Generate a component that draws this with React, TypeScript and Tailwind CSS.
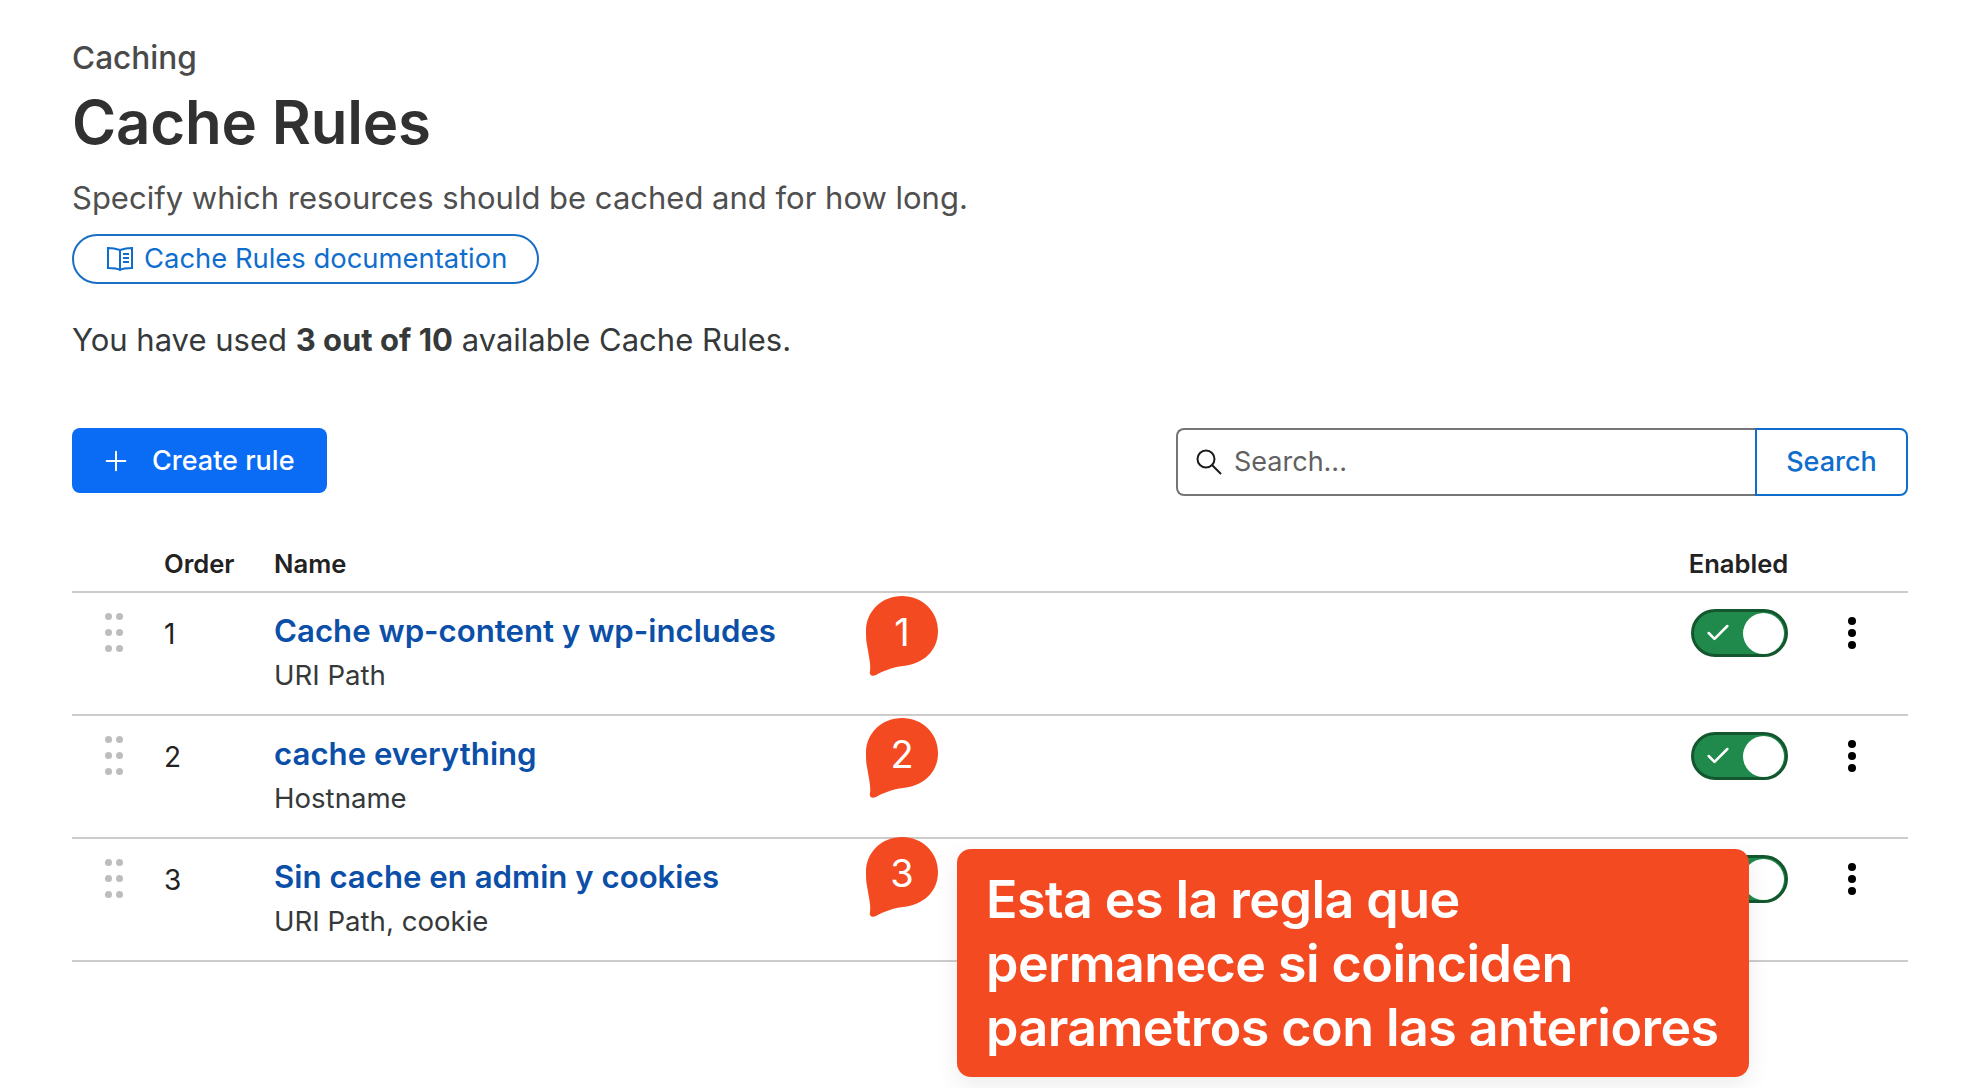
import React from "react";
import { Check, Plus } from "lucide-react";

const font = { fontFamily: "Inter, 'Liberation Sans', sans-serif" };

const rules = [
  { id: 1, name: "Cache wp-content y wp-includes", sub: "URI Path", bubbleTop: "top-[2px]" },
  { id: 2, name: "cache everything", sub: "Hostname", bubbleTop: "top-[1px]" },
  { id: 3, name: "Sin cache en admin y cookies", sub: "URI Path, cookie", bubbleTop: "-top-[3px]" },
];

function DragDots() {
  return (
    <div className="grid grid-cols-2 gap-x-[4px] gap-y-[9px] w-[18px]">
      {[0, 1, 2, 3, 4, 5].map((i) => (
        <div key={i} className="w-[7px] h-[7px] rounded-full bg-[#bdbdbd]" />
      ))}
    </div>
  );
}

function Kebab() {
  return (
    <div className="flex flex-col gap-[4px] items-center">
      <div className="w-2 h-2 rounded-full bg-black" />
      <div className="w-2 h-2 rounded-full bg-black" />
      <div className="w-2 h-2 rounded-full bg-black" />
    </div>
  );
}

function Toggle() {
  return (
    <div className="w-[97px] h-[48px] rounded-full bg-[#1f8a4c] border-[3px] border-[#14572f] flex items-center justify-between pl-[10px] pr-[1px]">
      <Check size={28} strokeWidth={2.2} className="text-white" />
      <div className="w-[41px] h-[41px] rounded-full bg-white" />
    </div>
  );
}

function Bubble({ n }: { n: number }) {
  return (
    <div className="relative w-[74px] h-[82px] text-white">
      <svg viewBox="0 0 74 82" className="absolute inset-0 w-full h-full">
        <path
          d="M37 1C57 1 73 16 73 36C73 56 58 69 38 71C28 72 18 76 11 80C7 82 4 80 5 76C6 70 4 62 2 50C1 46 1 40 1 36C1 16 17 1 37 1Z"
          fill="#f44a22"
        />
      </svg>
      <div className="absolute left-0 top-[9px] w-full text-center text-[38px] leading-[56px]">{n}</div>
    </div>
  );
}

function BookIcon() {
  return (
    <svg width="28" height="26" viewBox="0 0 28 26" fill="none" stroke="#0f6ecd" strokeWidth="2">
      <path d="M14 4C11 3 6 2 2 2V22C6 22 11 22 14 24C17 22 22 22 26 22V2C22 2 17 3 14 4ZM14 4V24" />
      <path d="M17 8H23M17 12H23M17 16H23" />
    </svg>
  );
}

function SearchIcon() {
  return (
    <svg width="28" height="28" viewBox="0 0 28 28" fill="none" stroke="#1a1a1a" strokeWidth="2">
      <circle cx="11" cy="11" r="8.5" />
      <path d="M17 17L26 26" />
    </svg>
  );
}

export default function App() {
  return (
    <div className="relative w-[1974px] h-[1088px] bg-white overflow-hidden" style={font}>
      <div className="pl-[72px] pr-[66px] pt-[37px]">
        <div className="text-[31.6px] leading-[42px] font-medium text-[#4a4a4a]">Caching</div>
        <h1 className="mt-[7px] text-[60px] leading-[72px] font-semibold tracking-[-0.2px] text-[#313131]">Cache Rules</h1>
        <p className="mt-[19px] text-[31px] leading-[42px] text-[#4f4f4f]">Specify which resources should be cached and for how long.</p>
        <a className="mt-[15px] inline-flex items-center gap-[10px] h-[50px] w-[467px] pl-[32px] rounded-full border-2 border-[#1a6fc4] text-[27.4px] text-[#0f6ecd]">
          <BookIcon />
          Cache Rules documentation
        </a>
        <p className="mt-[35px] text-[31px] leading-[42px] text-[#36393a]">
          You have used <b className="font-bold">3 out of 10</b> available Cache Rules.
        </p>

        <div className="mt-[67px] flex items-start justify-between">
          <button className="w-[255px] h-[65px] rounded-[8px] bg-[#0a6cf5] text-white text-[27px] font-medium flex items-center pl-[28px] pt-[1px] gap-[20px]">
            <Plus size={32} strokeWidth={1.5} />
            Create rule
          </button>
          <div className="flex h-[68px] w-[732px]">
            <div className="flex-1 flex items-center gap-[11px] pl-[17px] rounded-l-[8px] border-2 border-r-0 border-[#757575]">
              <SearchIcon />
              <span className="text-[27px] text-[#616161]">Search...</span>
            </div>
            <button className="w-[153px] rounded-r-[8px] border-2 border-[#0f6ecd] text-[#0f6ecd] text-[27px] font-medium">Search</button>
          </div>
        </div>

        <div className="mt-[40px] flex items-center h-[57px] pt-[2px] border-b-2 border-[#cccccc] text-[25.6px] font-semibold text-[#222222]">
          <div className="w-[92px]" />
          <div className="w-[110px]">Order</div>
          <div className="flex-1">Name</div>
          <div className="w-[97px] mr-[121px] whitespace-nowrap flex justify-center">Enabled</div>
        </div>

        {rules.map((r) => (
          <div key={r.id} className="relative h-[123px] border-b-2 border-[#cccccc] flex items-start">
            <div className="w-[92px] pl-[33px] pt-[20px]"><DragDots /></div>
            <div className="w-[110px] pt-[21px] text-[28px] leading-[40px] text-[#222222]">{r.id}</div>
            <div className="flex-1 pt-[16px]">
              <div className="text-[31.2px] leading-[44px] font-semibold text-[#0b4fa8]">{r.name}</div>
              <div className="mt-[2px] text-[27.6px] leading-[40px] text-[#36393a]">{r.sub}</div>
            </div>
            <div className="mr-[120px] pt-[16px]"><Toggle /></div>
            <div className="absolute right-[52px] top-[24px]"><Kebab /></div>
            <div className={`absolute left-[793px] ${r.bubbleTop}`}><Bubble n={r.id} /></div>
          </div>
        ))}
      </div>

      <div className="absolute left-[957px] top-[849px] w-[792px] h-[228px] rounded-[14px] bg-[#f44a22] text-white text-[52px] leading-[64px] font-semibold tracking-[-0.57px] pl-[29px] pt-[19px] shadow-[0_8px_24px_rgba(0,0,0,0.08)]">
        Esta es la regla que<br />permanece si coinciden<br />parametros con las anteriores
      </div>
    </div>
  );
}
